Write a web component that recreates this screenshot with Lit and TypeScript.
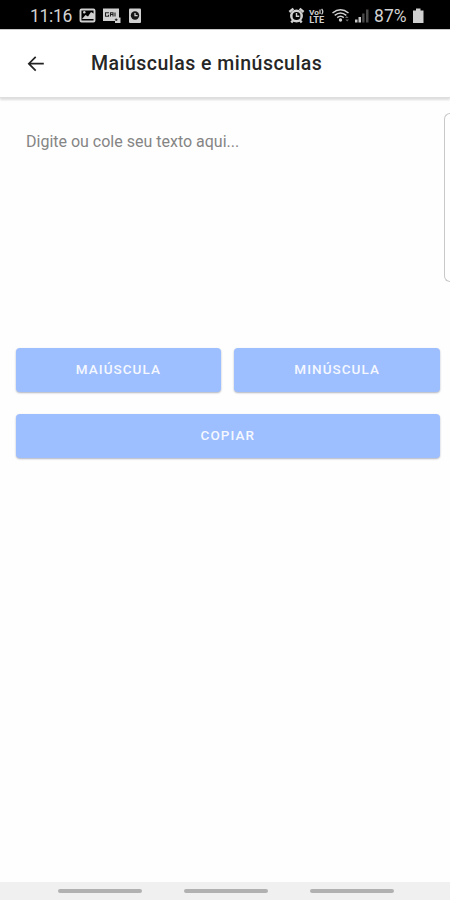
import { LitElement, html, css } from "lit";
import { customElement } from "lit/decorators.js";

@customElement("app-root")
export class AppRoot extends LitElement {
  static styles = css`
    :host {
      display: flex;
      flex-direction: column;
      width: 450px;
      height: 900px;
      overflow: hidden;
      background: #fefefe;
      font-family: Roboto, "Liberation Sans", sans-serif;
    }
    svg { display: block; flex: none; }
    .status {
      flex: none;
      box-sizing: border-box;
      height: 30px;
      background: #000;
      border-bottom: 1px solid #c9c9c9;
      display: flex;
      align-items: center;
      justify-content: space-between;
      padding: 3px 26px 0 30px;
      color: #d2d2d2;
      font-size: 17.5px;
      line-height: 26px;
    }
    .group { display: flex; align-items: center; }
    .time { width: 49px; letter-spacing: -0.3px; }
    .percent { width: 38px; letter-spacing: 0.1px; }
    header {
      flex: none;
      height: 67px;
      display: flex;
      align-items: center;
      padding-left: 24px;
      background: #fff;
      border-bottom: 1px solid #dedede;
      box-shadow: 0 2px 2px #dedede;
    }
    h1 {
      margin: 0 0 0 43px;
      font-size: 19.5px;
      font-weight: 500;
      line-height: 24px;
      letter-spacing: 0.48px;
      color: #262626;
      white-space: nowrap;
    }
    main { flex: 1; display: flex; flex-direction: column; }
    .entry {
      display: flex;
      justify-content: space-between;
      height: 169px;
      margin-top: 15px;
    }
    .hint {
      padding: 19px 0 0 26px;
      font-size: 16px;
      line-height: 20px;
      color: #858585;
      white-space: nowrap;
    }
    .edge {
      box-sizing: border-box;
      width: 6px;
      border: 1px solid #c8c8c8;
      border-right: 0;
      border-radius: 6px 0 0 6px;
    }
    .actions {
      display: grid;
      grid-template-columns: 1fr 1fr;
      gap: 22px 13px;
      margin: 65.5px 10px 0 15.5px;
    }
    button {
      box-sizing: border-box;
      height: 44px;
      margin: 0;
      padding: 0 0 2px;
      border: 0;
      border-radius: 4px;
      background: #9dbeff;
      box-shadow: 0 1px 2px rgba(60, 70, 95, 0.4);
      color: #f5f8ff;
      font: 500 13.5px/42px Roboto, "Liberation Sans", sans-serif;
      letter-spacing: 1.05px;
    }
    .wide { grid-column: 1 / -1; }
    nav {
      flex: none;
      height: 18px;
      background: #f0f0f0;
      display: flex;
      align-items: center;
      gap: 42px;
      padding-left: 57.5px;
    }
    .bar { width: 84px; height: 4px; border-radius: 2px; background: #b1b1b1; }
  `;

  render() {
    return html`
      <div class="status">
        <div class="group">
          <span class="time">11:16</span>
          <svg width="64" height="18" viewBox="79 6.5 64 18">
            <rect x="80.5" y="9" width="14" height="12" rx="1" fill="none" stroke="#d0d0d0" stroke-width="1.9"/>
            <path d="M82 18.5l3.5-4 2.5 1.500 3-4.500 3.500 2v5z" fill="#d0d0d0"/>
            <circle cx="84.3" cy="11.8" r="1.2" fill="#d0d0d0"/>
            <path d="M103 8h16v9h1.500v5.500h-5.500v-2h-12z" fill="#d0d0d0"/>
            <path d="M109 12.2h-3.5v3.5h3v-1.5M110.5 16v-3.8h2.5V16M110.5 14h2.5M115 12v4M116.2 18v2.5M114.8 19.3h2.8" fill="none" stroke="#202020" stroke-width="1.1"/>
            <rect x="129" y="8" width="12" height="14.500" rx="1" fill="#d0d0d0"/>
            <circle cx="135" cy="15" r="4.2" fill="#161616"/>
            <path d="M135 12.4v2.8h2.6" fill="none" stroke="#d0d0d0" stroke-width="1.3"/>
          </svg>
        </div>
        <div class="group">
          <svg width="86" height="20" viewBox="287 5.5 86 20">
            <g fill="none" stroke="#d0d0d0">
              <circle cx="295.5" cy="15.5" r="5.2" stroke-width="2.5"/>
              <path d="M288.4 11.5l4-3.4M302.6 11.5l-4-3.4M292 20l-1.7 2M299 20l1.7 2" stroke-width="2.4"/>
              <path d="M295.5 12.5v3.3h2.8" stroke-width="1.4"/>
              <path d="M331.5 12.5q8-6.5 16 0M333.7 14.9q5.8-4.8 11.6 0M336.2 17.2q3.3-2.7 6.6 0" stroke-width="1.5"/>
              <path d="M319 9v4.500M320.600 8.500q2.400 2.700 0 5.400" stroke-width="1.2"/>
            </g>
            <circle cx="339.5" cy="19.5" r="1.7" fill="#d0d0d0"/>
            <path d="M344 17.5l1.8-2 1.8 2zM348 19l-1.8 2-1.8-2z" fill="#666"/>
            <g fill="#d0d0d0" font-family="Roboto, sans-serif" font-weight="700">
              <text x="308" y="14" font-size="8" textLength="10" lengthAdjust="spacingAndGlyphs">Vo</text>
              <text x="308.3" y="22.5" font-size="8.5" textLength="14.8" lengthAdjust="spacingAndGlyphs">LTE</text>
            </g>
            <path d="M354 19h2.5v3H354zM357.5 16.5h2.5V22h-2.5z" fill="#c8c8c8"/>
            <path d="M361.2 13h2.3v9h-2.3zM365 9h2.5v13H365z" fill="#4a4a4a"/>
          </svg>
          <span class="percent">87%</span>
          <svg width="12" height="18" viewBox="411 6.5 12 18">
            <path d="M415 8h4.5v2h3v12.5h-10.5V10h3z" fill="#d0d0d0"/>
          </svg>
        </div>
      </div>
      <header>
        <svg width="24" height="24" viewBox="24 52 24 24">
          <path d="M43.8 63.7H29M35.7 56.8L28.8 63.7L35.7 70.6" fill="none" stroke="#222" stroke-width="1.7"/>
        </svg>
        <h1>Maiúsculas e minúsculas</h1>
      </header>
      <main>
        <div class="entry">
          <div class="hint">Digite ou cole seu texto aqui...</div>
          <div class="edge"></div>
        </div>
        <div class="actions">
          <button>MAIÚSCULA</button>
          <button>MINÚSCULA</button>
          <button class="wide">COPIAR</button>
        </div>
      </main>
      <nav>
        <div class="bar"></div>
        <div class="bar"></div>
        <div class="bar"></div>
      </nav>
    `;
  }
}
